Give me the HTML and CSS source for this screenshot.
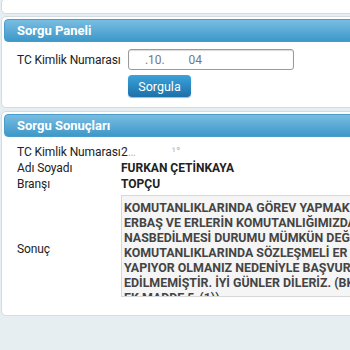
FILE: index.html
```html
<!DOCTYPE html>
<html lang="tr">
<head>
  <meta charset="UTF-8">
  <meta name="viewport" content="width=device-width, initial-scale=1.0">
  <title>Sorgu Paneli</title>
  <link rel="stylesheet" href="styles.css">
</head>
<body>
  <div class="panel panel-top"></div>

  <div class="panel">
    <div class="panel-header">Sorgu Paneli</div>
    <div class="form">
      <label class="label" for="tc">TC Kimlik Numarası</label>
      <input class="field" id="tc" type="text" value="    .10.        04">
      <span></span>
      <button class="button" type="button">Sorgula</button>
    </div>
  </div>

  <div class="panel panel-results">
    <div class="panel-header">Sorgu Sonuçları</div>
    <div class="results">
      <div class="label">TC Kimlik Numarası</div>
      <div class="value-plain">2<span class="faded">…            ¹°</span></div>

      <div class="label">Adı Soyadı</div>
      <div class="value">FURKAN ÇETİNKAYA</div>

      <div class="label">Branşı</div>
      <div class="value">TOPÇU</div>

      <div class="label label-result">Sonuç</div>
      <div class="message">KOMUTANLIKLARINDA GÖREV YAPMAKTA OLAN
ERBAŞ VE ERLERİN KOMUTANLIĞIMIZDA GÖREVE
NASBEDİLMESİ DURUMU MÜMKÜN DEĞİLDİR.
KOMUTANLIKLARINDA SÖZLEŞMELİ ER OLARAK GÖREV
YAPIYOR OLMANIZ NEDENİYLE BAŞVURUNUZ KABUL
EDİLMEMİŞTİR. İYİ GÜNLER DİLERİZ. (BKZ. 3269 SK.
EK MADDE 5-(1))</div>
    </div>
  </div>
</body>
</html>
```

FILE: styles.css
```css
* {
  box-sizing: border-box;
  margin: 0;
  padding: 0;
}

body {
  font-family: Roboto, "Noto Sans", sans-serif;
  background-color: #e7eef2;
  color: #222;
  width: 350px;
  height: 350px;
  overflow: hidden;
  padding-left: 1px;
}

.panel {
  width: 420px;
  background-color: white;
  border: 1px solid #d3dce2;
  border-radius: 5px;
  padding: 2px;
  margin-bottom: 3px;
}

.panel-top {
  height: 16px;
  margin-top: -2px;
  margin-bottom: 2px;
}

.panel-header {
  height: 23px;
  line-height: 22px;
  padding-left: 12px;
  border-radius: 4px;
  border: 1px solid #4a9dca;
  background: linear-gradient(#79bde2, #3d98c9);
  color: white;
  font-size: 13px;
  font-weight: bold;
}

.form {
  display: grid;
  grid-template-columns: 111px 166px;
  row-gap: 5px;
  padding: 7px 0 8px 13px;
}

.label {
  font-size: 12px;
  letter-spacing: -0.1px;
  color: #222;
  white-space: nowrap;
  display: flex;
  align-items: center;
}

.label-result {
  padding-top: 9px;
}

.field {
  height: 21px;
  border: 1px solid #9a9a9a;
  border-radius: 3px;
  background-color: white;
  font-family: inherit;
  font-size: 12px;
  color: #777;
  padding: 0 4px;
  box-shadow: inset 0 1px 1px rgba(0,0,0,0.15);
}

.button {
  width: 63px;
  height: 22px;
  border: none;
  border-radius: 4px;
  background: linear-gradient(#3ca3da, #1d70aa);
  color: white;
  font-family: inherit;
  font-size: 12.5px;
  box-shadow: 0 1px 1px rgba(0,0,0,0.3);
}

.results {
  display: grid;
  grid-template-columns: 104px 300px;
  grid-template-rows: 16px 16px 16px auto;
  padding: 7px 0 16px 13px;
}

.value,
.value-plain {
  font-size: 12px;
  display: flex;
  align-items: center;
  white-space: pre;
}

.value {
  font-weight: bold;
}

.faded {
  color: #bbb;
}

.message {
  height: 102px;
  margin-top: 3px;
  overflow: hidden;
  white-space: pre;
  background-color: #f5f5f5;
  border: 1px solid #d8d8d8;
  padding: 4px 2px 0;
  font-size: 12.4px;
  font-weight: bold;
  line-height: 15px;
  color: #444;
}
```
